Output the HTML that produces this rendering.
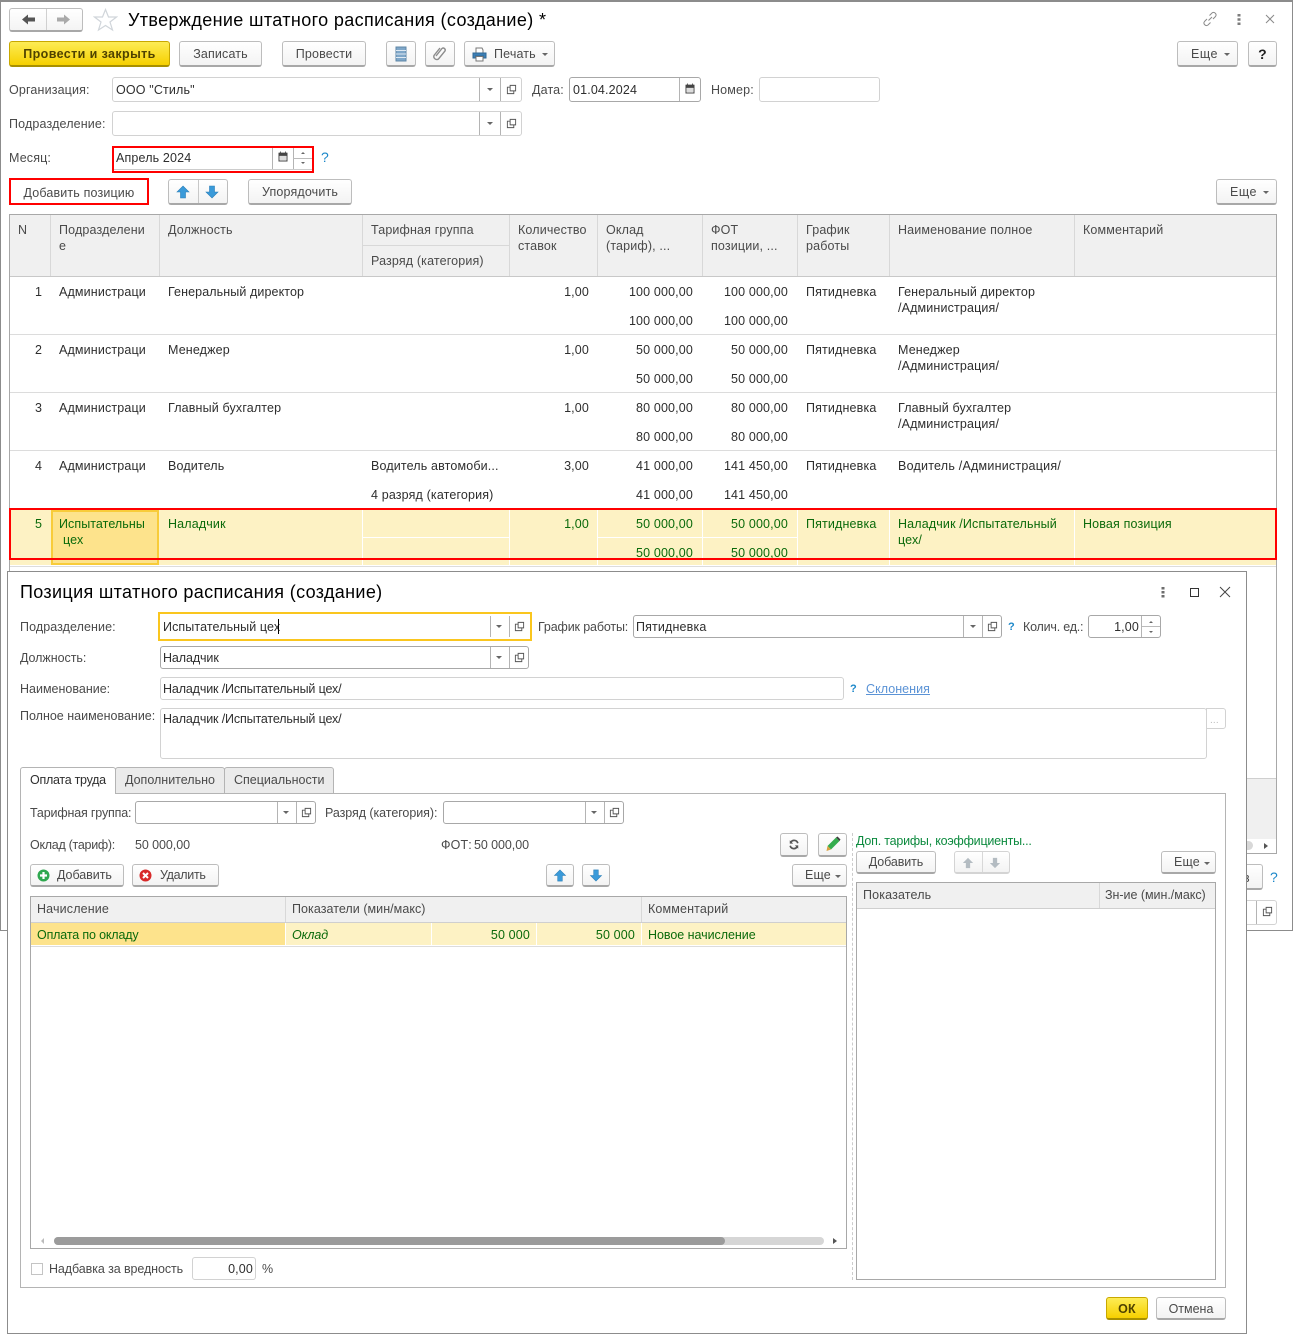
<!DOCTYPE html>
<html lang="ru"><head><meta charset="utf-8"><title>Утверждение штатного расписания</title>
<style>
html,body{margin:0;padding:0;background:#fff}
#r{position:relative;width:1293px;height:1339px;overflow:hidden;background:#fff;font:13px/16px "Liberation Sans",Arial,sans-serif;color:#4a4a4a}
#r div,#r span.t,#r svg{position:absolute}
.t{position:absolute;white-space:nowrap;line-height:16px;font-size:12.5px;letter-spacing:.15px}
.d{color:#2e2e2e}
.g{color:#0b6a0b}
.r{text-align:right;width:100px}
.b{box-sizing:border-box;border:1px solid #bdbdbd;border-bottom:2px solid #a8a8a8;border-radius:3px;background:linear-gradient(#fff,#f3f3f3);text-align:center;line-height:25px;font-size:12.5px;letter-spacing:.15px;color:#4a4a4a;white-space:nowrap}
.y{background:linear-gradient(#fdec55,#f6d000);border-color:#c8a800;border-bottom-color:#a89000;color:#4f4200;font-weight:bold}
.f{box-sizing:border-box;border:1px solid #d2d2d2;border-radius:3px;background:#fff}
.f2{border-color:#a8a8a8}
.s{width:1px;background:#b4b4b4}
.l{background:#dcdcdc}
.a{width:0;height:0;border-left:3px solid transparent;border-right:3px solid transparent;border-top:3px solid #666}
.h{background:#f0f0f0}
.w{background:#fff}
</style></head><body>
<svg width="0" height="0" style="position:absolute">
<defs>
<symbol id="cp" viewBox="0 0 12 12"><path d="M4.500 1.500h6v6h-6z M4.500 3.500H1.500v7h7V7.500" fill="none" stroke="#555" stroke-width="1"/></symbol>
<symbol id="up" viewBox="0 0 14 14"><path d="M7 1L13 7H9.500V13H4.500V7H1Z" fill="#3a9ad9" stroke="#2b7fb8" stroke-width=".6"/></symbol>
<symbol id="dn" viewBox="0 0 14 14"><path d="M7 13L13 7H9.500V1H4.500V7H1Z" fill="#3a9ad9" stroke="#2b7fb8" stroke-width=".6"/></symbol>
<symbol id="cal" viewBox="0 0 10 10"><path d="M1 2h8v7.500H1z" fill="#fff" stroke="#444"/><path d="M1 1.500h8V4H1zM2.500 0v2M7.500 0v2M2.500 5.500h1M4.500 5.500h1M6.500 5.500h1M2.500 7.500h1M4.500 7.500h1M6.500 7.500h1" fill="#444" stroke="#444" stroke-width=".8"/></symbol>
</defs>
</svg>
<div id="r">
<!-- back window -->
<div style="left:0;top:0;width:1293px;height:931px;box-sizing:border-box;border:1px solid #8c8c8c;border-width:2px 1px 1px 1px;background:#fff"></div>

<div class="b" style="left:9px;top:8px;width:74px;height:24px;background:linear-gradient(#fff,#f4f4f4)"></div>
<div class="s" style="left:46px;top:9px;height:21px;background:#d0d0d0"></div>
<svg style="left:21px;top:13px" width="15" height="13" viewBox="0 0 15 13"><path d="M1 6.500L7 1.500V4.500H14V8.500H7V11.500Z" fill="#555"/></svg>
<svg style="left:56px;top:13px" width="15" height="13" viewBox="0 0 15 13"><path d="M14 6.500L8 1.500V4.500H1V8.500H8V11.500Z" fill="#aaa"/></svg>
<svg style="left:93px;top:8px" width="25" height="24" viewBox="0 0 25 24"><path d="M12.500 1.500L15.500 9H23.500L17 14L19.500 22L12.500 17.500L5.500 22L8 14L1.500 9H9.500Z" fill="#fff" stroke="#d0d5da" stroke-width="1.200"/></svg>
<span class="t" style="left:128px;top:10px;font-size:18px;line-height:20px;color:#000;letter-spacing:.37px">Утверждение штатного расписания (создание) *</span>
<svg style="left:1201px;top:10px" width="18" height="18" viewBox="0 0 18 18"><path d="M7.500 10.500L11 7M6 9L3.500 11.500a2.500 2.500 0 0 0 3.500 3.500L9.500 12.500M8.500 5.500L11 3a2.500 2.500 0 0 1 3.500 3.500L12 9" fill="none" stroke="#8a8a8a" stroke-width="1"/></svg>
<svg style="left:1236px;top:12px" width="6" height="15" viewBox="0 0 6 15"><path d="M1.500 2h3v2.500h-3zM1.500 6.200h3v2.500h-3zM1.500 10.500h3V13h-3z" fill="#7d7d7d"/></svg>
<svg style="left:1264px;top:13px" width="12" height="12" viewBox="0 0 12 12"><path d="M2 2L10 10M10 2L2 10" stroke="#8a8a8a" stroke-width="1"/></svg>

<div class="b y" style="left:9px;top:41px;width:161px;height:26px;letter-spacing:.4px">Провести и закрыть</div>
<div class="b" style="left:179px;top:41px;width:83px;height:26px">Записать</div>
<div class="b" style="left:282px;top:41px;width:84px;height:26px">Провести</div>
<div class="b" style="left:386px;top:41px;width:30px;height:26px"></div>
<svg style="left:395px;top:46px" width="12" height="16" viewBox="0 0 12 16"><path d="M1 1h10v14H1z" fill="#7fa7c9" stroke="#5f87a8"/><path d="M1 4.500h10M1 8h10M1 11.500h10" stroke="#dfe9f2"/></svg>
<div class="b" style="left:425px;top:41px;width:30px;height:26px"></div>
<svg style="left:432px;top:45px" width="16" height="18" viewBox="0 0 16 18"><path d="M4 11L10 3.500a2 2 0 0 1 3 2.500L6.500 14a3 3 0 0 1-4.500-3.500L8 3" fill="none" stroke="#8c8c8c" stroke-width="1.400"/></svg>
<div class="b" style="left:464px;top:41px;width:91px;height:26px;text-align:left;padding-left:29px">Печать</div>
<svg style="left:472px;top:47px" width="15" height="15" viewBox="0 0 15 15"><path d="M4 1h6l1 2v3H4z" fill="#fff" stroke="#777"/><path d="M1 6h13v5h-2.500v-2h-8v2H1z" fill="#3c7fb5" stroke="#2f6896"/><path d="M4 9.500h7V14H4z" fill="#fff" stroke="#777"/></svg>
<div class="a" style="left:542px;top:53px"></div>
<div class="b" style="left:1177px;top:41px;width:61px;height:26px;text-align:left;padding-left:13px;letter-spacing:.5px">Еще</div>
<div class="a" style="left:1224px;top:53px"></div>
<div class="b d" style="left:1248px;top:41px;width:29px;height:26px;font-weight:bold;font-size:14px;color:#222">?</div>

<!-- header fields -->
<span class="t" style="left:9px;top:82px">Организация:</span>
<div class="f" style="left:112px;top:77px;width:410px;height:25px"></div>
<span class="t d" style="left:116px;top:82px">ООО "Стиль"</span>
<div class="s" style="left:479px;top:78px;height:23px"></div><div class="a" style="left:487px;top:88px"></div>
<div class="s" style="left:500px;top:78px;height:23px"></div><svg style="left:506px;top:84px" width="11" height="11"><use href="#cp"/></svg>
<span class="t" style="left:532px;top:82px">Дата:</span>
<div class="f f2" style="left:569px;top:77px;width:132px;height:25px"></div>
<span class="t d" style="left:573px;top:82px">01.04.2024</span>
<div class="s" style="left:679px;top:78px;height:23px"></div><svg style="left:685px;top:83px" width="10" height="11"><use href="#cal"/></svg>
<span class="t" style="left:711px;top:82px">Номер:</span>
<div class="f" style="left:759px;top:77px;width:121px;height:25px"></div>

<span class="t" style="left:9px;top:116px">Подразделение:</span>
<div class="f" style="left:112px;top:111px;width:410px;height:25px"></div>
<div class="s" style="left:479px;top:112px;height:23px"></div><div class="a" style="left:487px;top:122px"></div>
<div class="s" style="left:500px;top:112px;height:23px"></div><svg style="left:506px;top:118px" width="11" height="11"><use href="#cp"/></svg>

<span class="t" style="left:9px;top:150px">Месяц:</span>
<div style="left:112px;top:146px;width:202px;height:27px;box-sizing:border-box;border:2px solid #f00;background:#fff"></div>
<div style="left:114px;top:169px;width:198px;height:1px;background:#ccc"></div>
<span class="t d" style="left:116px;top:150px">Апрель 2024</span>
<div class="s" style="left:272px;top:148px;height:21px"></div><svg style="left:278px;top:151px" width="10" height="11"><use href="#cal"/></svg>
<div class="s" style="left:293px;top:148px;height:21px"></div><div style="left:293px;top:158px;width:19px;height:1px;background:#bbb"></div>
<div class="a" style="left:301px;top:152px;transform:rotate(180deg);border-left-width:2px;border-right-width:2px;border-top-width:2px"></div>
<div class="a" style="left:301px;top:162px;border-left-width:2px;border-right-width:2px;border-top-width:2px"></div>
<span class="t" style="left:321px;top:149px;color:#1b87c9;font-size:14px">?</span>

<div class="b" style="left:9px;top:178px;width:140px;height:27px;border:2px solid #f00;border-radius:0;background:#fff;line-height:26px">Добавить позицию</div>
<div class="b" style="left:168px;top:179px;width:60px;height:26px"></div>
<div class="s" style="left:198px;top:180px;height:23px;background:#c8c8c8"></div>
<svg style="left:176px;top:185px" width="14" height="14"><use href="#up"/></svg>
<svg style="left:205px;top:185px" width="14" height="14"><use href="#dn"/></svg>
<div class="b" style="left:248px;top:179px;width:104px;height:26px">Упорядочить</div>
<div class="b" style="left:1216px;top:179px;width:61px;height:26px;text-align:left;padding-left:13px;letter-spacing:.5px">Еще</div>
<div class="a" style="left:1263px;top:191px"></div>

<!-- main table -->
<div style="left:9px;top:214px;width:1268px;height:640px;box-sizing:border-box;border:1px solid #a8a8a8;background:#fff"></div>
<div class="h" style="left:10px;top:215px;width:1266px;height:61px"></div>
<div class="l" style="left:10px;top:276px;width:1266px;height:1px;background:#c8c8c8"></div>
<div class="s w" style="left:50px;top:215px;height:61px;background:#d8d8d8"></div>
<div class="s" style="left:159px;top:215px;height:61px;background:#d8d8d8"></div>
<div class="s" style="left:362px;top:215px;height:61px;background:#d8d8d8"></div>
<div class="s" style="left:509px;top:215px;height:61px;background:#d8d8d8"></div>
<div class="s" style="left:597px;top:215px;height:61px;background:#d8d8d8"></div>
<div class="s" style="left:702px;top:215px;height:61px;background:#d8d8d8"></div>
<div class="s" style="left:797px;top:215px;height:61px;background:#d8d8d8"></div>
<div class="s" style="left:889px;top:215px;height:61px;background:#d8d8d8"></div>
<div class="s" style="left:1074px;top:215px;height:61px;background:#d8d8d8"></div>
<div class="l" style="left:363px;top:245px;width:146px;height:1px;background:#d8d8d8"></div>
<span class="t" style="left:18px;top:222px">N</span>
<span class="t" style="left:59px;top:222px">Подразделени</span><span class="t" style="left:59px;top:238px">е</span>
<span class="t" style="left:168px;top:222px">Должность</span>
<span class="t" style="left:371px;top:222px">Тарифная группа</span><span class="t" style="left:371px;top:253px">Разряд (категория)</span>
<span class="t" style="left:518px;top:222px">Количество</span><span class="t" style="left:518px;top:238px">ставок</span>
<span class="t" style="left:606px;top:222px">Оклад</span><span class="t" style="left:606px;top:238px">(тариф), ...</span>
<span class="t" style="left:711px;top:222px">ФОТ</span><span class="t" style="left:711px;top:238px">позиции, ...</span>
<span class="t" style="left:806px;top:222px">График</span><span class="t" style="left:806px;top:238px">работы</span>
<span class="t" style="left:898px;top:222px">Наименование полное</span>
<span class="t" style="left:1083px;top:222px">Комментарий</span>

<div class="l" style="left:10px;top:334px;width:1266px;height:1px"></div>
<div class="l" style="left:10px;top:392px;width:1266px;height:1px"></div>
<div class="l" style="left:10px;top:450px;width:1266px;height:1px"></div>
<div class="l" style="left:10px;top:566px;width:1266px;height:1px"></div>

<span class="t d" style="left:35px;top:284px">1</span><span class="t d" style="left:59px;top:284px">Администраци</span><span class="t d" style="left:168px;top:284px;letter-spacing:.1px">Генеральный директор</span>
<span class="t d r" style="left:489px;top:284px">1,00</span><span class="t d r" style="left:593px;top:284px">100 000,00</span><span class="t d r" style="left:688px;top:284px">100 000,00</span><span class="t d" style="left:806px;top:284px">Пятидневка</span><span class="t d" style="left:898px;top:284px">Генеральный директор</span><span class="t d" style="left:898px;top:300px">/Администрация/</span>
<span class="t d r" style="left:593px;top:313px">100 000,00</span><span class="t d r" style="left:688px;top:313px">100 000,00</span>

<span class="t d" style="left:35px;top:342px">2</span><span class="t d" style="left:59px;top:342px">Администраци</span><span class="t d" style="left:168px;top:342px">Менеджер</span>
<span class="t d r" style="left:489px;top:342px">1,00</span><span class="t d r" style="left:593px;top:342px">50 000,00</span><span class="t d r" style="left:688px;top:342px">50 000,00</span><span class="t d" style="left:806px;top:342px">Пятидневка</span><span class="t d" style="left:898px;top:342px">Менеджер</span><span class="t d" style="left:898px;top:358px">/Администрация/</span>
<span class="t d r" style="left:593px;top:371px">50 000,00</span><span class="t d r" style="left:688px;top:371px">50 000,00</span>

<span class="t d" style="left:35px;top:400px">3</span><span class="t d" style="left:59px;top:400px">Администраци</span><span class="t d" style="left:168px;top:400px">Главный бухгалтер</span>
<span class="t d r" style="left:489px;top:400px">1,00</span><span class="t d r" style="left:593px;top:400px">80 000,00</span><span class="t d r" style="left:688px;top:400px">80 000,00</span><span class="t d" style="left:806px;top:400px">Пятидневка</span><span class="t d" style="left:898px;top:400px">Главный бухгалтер</span><span class="t d" style="left:898px;top:416px">/Администрация/</span>
<span class="t d r" style="left:593px;top:429px">80 000,00</span><span class="t d r" style="left:688px;top:429px">80 000,00</span>

<span class="t d" style="left:35px;top:458px">4</span><span class="t d" style="left:59px;top:458px">Администраци</span><span class="t d" style="left:168px;top:458px">Водитель</span><span class="t d" style="left:371px;top:458px">Водитель автомоби...</span>
<span class="t d r" style="left:489px;top:458px">3,00</span><span class="t d r" style="left:593px;top:458px">41 000,00</span><span class="t d r" style="left:688px;top:458px">141 450,00</span><span class="t d" style="left:806px;top:458px">Пятидневка</span><span class="t d" style="left:898px;top:458px;letter-spacing:.23px">Водитель /Администрация/</span>
<span class="t d" style="left:371px;top:487px">4 разряд (категория)</span><span class="t d r" style="left:593px;top:487px">41 000,00</span><span class="t d r" style="left:688px;top:487px">141 450,00</span>

<!-- selected row -->
<div style="left:10px;top:509px;width:1266px;height:56px;background:#fdf2c4"></div>
<div style="left:51px;top:510px;width:108px;height:55px;box-sizing:border-box;border:2px solid #f8cc3a;background:#fde38c"></div>
<div class="s" style="left:362px;top:509px;height:56px;background:#fff"></div>
<div class="s" style="left:509px;top:509px;height:56px;background:#fff"></div>
<div class="s" style="left:597px;top:509px;height:56px;background:#fff"></div>
<div class="s" style="left:702px;top:509px;height:56px;background:#fff"></div>
<div class="s" style="left:797px;top:509px;height:56px;background:#fff"></div>
<div class="s" style="left:889px;top:509px;height:56px;background:#fff"></div>
<div class="s" style="left:1074px;top:509px;height:56px;background:#fff"></div>
<div style="left:363px;top:537px;width:146px;height:1px;background:#fff"></div>
<div style="left:598px;top:537px;width:199px;height:1px;background:#fff"></div>
<span class="t g" style="left:35px;top:516px">5</span><span class="t g" style="left:59px;top:516px;letter-spacing:.07px">Испытательны</span><span class="t g" style="left:63px;top:532px">цех</span><span class="t g" style="left:168px;top:516px">Наладчик</span>
<span class="t g r" style="left:489px;top:516px">1,00</span><span class="t g r" style="left:593px;top:516px">50 000,00</span><span class="t g r" style="left:688px;top:516px">50 000,00</span><span class="t g" style="left:806px;top:516px">Пятидневка</span><span class="t g" style="left:898px;top:516px">Наладчик /Испытательный</span><span class="t g" style="left:898px;top:532px">цех/</span><span class="t g" style="left:1083px;top:516px">Новая позиция</span>
<span class="t g r" style="left:593px;top:545px">50 000,00</span><span class="t g r" style="left:688px;top:545px">50 000,00</span>
<div style="left:9px;top:508px;width:1268px;height:52px;box-sizing:border-box;border:2px solid #f00"></div>

<!-- right strip of table and footer -->
<div class="h" style="left:1246px;top:779px;width:30px;height:60px"></div>
<div class="l" style="left:1246px;top:778px;width:30px;height:1px;background:#cfcfcf"></div>
<div style="left:1246px;top:841px;width:7px;height:9px;border-radius:0 5px 5px 0;background:#d8d8d8"></div>
<div style="left:1264px;top:843px;width:0;height:0;border-top:3px solid transparent;border-bottom:3px solid transparent;border-left:4px solid #555"></div>
<div class="b" style="left:1200px;top:864px;width:63px;height:26px"></div>
<span class="t" style="left:1243px;top:870px">в</span>
<span class="t" style="left:1270px;top:869px;color:#1b87c9;font-size:14px">?</span>
<div class="f" style="left:1180px;top:900px;width:97px;height:25px"></div>
<div class="s" style="left:1256px;top:901px;height:23px"></div><svg style="left:1262px;top:906px" width="11" height="11"><use href="#cp"/></svg>

<!-- dialog -->
<div style="left:7px;top:571px;width:1240px;height:763px;box-sizing:border-box;border:1px solid #8c8c8c;background:#fff"></div>
<span class="t" style="left:20px;top:582px;font-size:18px;line-height:20px;color:#000;letter-spacing:.34px">Позиция штатного расписания (создание)</span>
<svg style="left:1160px;top:586px" width="6" height="13" viewBox="0 0 6 13"><path d="M1.500 1h3v2.500h-3zM1.500 5h3v2.500h-3zM1.500 9h3v2.500h-3z" fill="#6d6d6d"/></svg>
<div style="left:1190px;top:588px;width:9px;height:9px;box-sizing:border-box;border:1.500px solid #333"></div>
<svg style="left:1219px;top:586px" width="12" height="12" viewBox="0 0 12 12"><path d="M1 1L11 11M11 1L1 11" stroke="#444" stroke-width="1"/></svg>

<span class="t" style="left:20px;top:619px;letter-spacing:.08px">Подразделение:</span>
<div style="left:158px;top:612px;width:374px;height:29px;box-sizing:border-box;border:2px solid #fac61e;background:#fff"></div>
<span class="t d" style="left:163px;top:619px;letter-spacing:.1px">Испытательный цех</span>
<div style="left:278px;top:619px;width:1px;height:15px;background:#000"></div>
<div class="s" style="left:490px;top:616px;height:21px"></div><div class="a" style="left:496px;top:625px"></div>
<div class="s" style="left:509px;top:616px;height:21px"></div><svg style="left:514px;top:621px" width="11" height="11"><use href="#cp"/></svg>
<span class="t" style="left:538px;top:619px;letter-spacing:-.14px">График работы:</span>
<div class="f f2" style="left:633px;top:615px;width:369px;height:23px"></div>
<span class="t d" style="left:636px;top:619px">Пятидневка</span>
<div class="s" style="left:963px;top:616px;height:21px"></div><div class="a" style="left:970px;top:625px"></div>
<div class="s" style="left:982px;top:616px;height:21px"></div><svg style="left:987px;top:621px" width="11" height="11"><use href="#cp"/></svg>
<span class="t" style="left:1008px;top:619px;font-size:11px;color:#1b87c9;font-weight:bold">?</span>
<span class="t" style="left:1023px;top:619px;letter-spacing:-.21px">Колич. ед.:</span>
<div class="f f2" style="left:1088px;top:615px;width:73px;height:23px"></div>
<span class="t d" style="left:1039px;top:619px;width:100px;text-align:right">1,00</span>
<div class="s" style="left:1141px;top:616px;height:21px"></div><div style="left:1142px;top:626px;width:18px;height:1px;background:#bbb"></div>
<div class="a" style="left:1149px;top:621px;transform:rotate(180deg);border-left-width:2px;border-right-width:2px;border-top-width:2px"></div>
<div class="a" style="left:1149px;top:631px;border-left-width:2px;border-right-width:2px;border-top-width:2px"></div>

<span class="t" style="left:20px;top:650px;letter-spacing:-.05px">Должность:</span>
<div class="f f2" style="left:160px;top:646px;width:369px;height:23px"></div>
<span class="t d" style="left:163px;top:650px;letter-spacing:-.1px">Наладчик</span>
<div class="s" style="left:490px;top:647px;height:21px"></div><div class="a" style="left:496px;top:656px"></div>
<div class="s" style="left:509px;top:647px;height:21px"></div><svg style="left:514px;top:652px" width="11" height="11"><use href="#cp"/></svg>

<span class="t" style="left:20px;top:681px;letter-spacing:0">Наименование:</span>
<div class="f" style="left:160px;top:677px;width:684px;height:23px"></div>
<span class="t d" style="left:163px;top:681px;letter-spacing:-.14px">Наладчик /Испытательный цех/</span>
<span class="t" style="left:850px;top:681px;font-size:11px;color:#1b87c9;font-weight:bold">?</span>
<span class="t" style="left:866px;top:681px;color:#5b93d6;text-decoration:underline;letter-spacing:.05px">Склонения</span>
<span class="t" style="left:20px;top:708px;letter-spacing:0">Полное наименование:</span>
<div class="f" style="left:160px;top:708px;width:1047px;height:51px"></div>
<span class="t d" style="left:163px;top:711px;letter-spacing:-.14px">Наладчик /Испытательный цех/</span>
<div class="f" style="left:1206px;top:708px;width:20px;height:21px;border-radius:0 3px 3px 0"></div>
<span class="t" style="left:1210px;top:713px;font-size:10px;color:#bbb">...</span>

<!-- tabs -->
<div style="left:20px;top:793px;width:1206px;height:495px;box-sizing:border-box;border:1px solid #b4b4b4;background:#fff"></div>
<div style="left:115px;top:767px;width:110px;height:27px;box-sizing:border-box;border:1px solid #b4b4b4;border-radius:3px 3px 0 0;background:#ebebeb"></div>
<div style="left:224px;top:767px;width:110px;height:27px;box-sizing:border-box;border:1px solid #b4b4b4;border-radius:3px 3px 0 0;background:#ebebeb"></div>
<div style="left:20px;top:767px;width:96px;height:27px;box-sizing:border-box;border:1px solid #b4b4b4;border-bottom:0;border-radius:3px 3px 0 0;background:#fff"></div>
<span class="t d" style="left:30px;top:772px;letter-spacing:-.27px">Оплата труда</span>
<span class="t" style="left:125px;top:772px;letter-spacing:0">Дополнительно</span>
<span class="t" style="left:234px;top:772px;letter-spacing:0">Специальности</span>

<span class="t" style="left:30px;top:805px;letter-spacing:-.16px">Тарифная группа:</span>
<div class="f f2" style="left:135px;top:801px;width:181px;height:23px"></div>
<div class="s" style="left:277px;top:802px;height:21px"></div><div class="a" style="left:283px;top:811px"></div>
<div class="s" style="left:296px;top:802px;height:21px"></div><svg style="left:301px;top:807px" width="11" height="11"><use href="#cp"/></svg>
<span class="t" style="left:325px;top:805px;letter-spacing:-.06px">Разряд (категория):</span>
<div class="f f2" style="left:443px;top:801px;width:181px;height:23px"></div>
<div class="s" style="left:585px;top:802px;height:21px"></div><div class="a" style="left:591px;top:811px"></div>
<div class="s" style="left:604px;top:802px;height:21px"></div><svg style="left:609px;top:807px" width="11" height="11"><use href="#cp"/></svg>

<span class="t" style="left:30px;top:837px;letter-spacing:-.28px">Оклад (тариф):</span>
<span class="t" style="left:135px;top:837px;letter-spacing:-.07px">50 000,00</span>
<span class="t" style="left:441px;top:837px">ФОТ:</span>
<span class="t" style="left:474px;top:837px;letter-spacing:-.07px">50 000,00</span>

<div class="b" style="left:780px;top:833px;width:28px;height:24px"></div>
<svg style="left:788px;top:839px" width="12" height="11" viewBox="0 0 14 13"><path d="M11.500 5a4.500 4.500 0 0 0-8-1.500M2.500 8a4.500 4.500 0 0 0 8 1.500" fill="none" stroke="#555" stroke-width="2"/><path d="M2 1.500V5.500H6ZM12 11.500V7.500H8Z" fill="#555"/></svg>
<div class="b" style="left:818px;top:833px;width:29px;height:24px"></div>
<svg style="left:825px;top:836px" width="16" height="16" viewBox="0 0 16 16"><path d="M11 1.500L14.500 5L6 13.500L2.500 10Z" fill="#35ad4e"/><path d="M11 1.500L12.500 0.500L15.500 3.500L14.500 5Z" fill="#3c3c3c"/><path d="M2.500 10L6 13.500L1.500 15Z" fill="#d9a03f"/></svg>
<span class="t" style="left:856px;top:833px;color:#0c8a3e;letter-spacing:-.21px">Доп. тарифы, коэффициенты...</span>

<div class="b" style="left:30px;top:864px;width:94px;height:23px;line-height:21px;text-align:left;padding-left:26px;letter-spacing:-.05px">Добавить</div>
<svg style="left:37px;top:869px" width="13" height="13" viewBox="0 0 13 13"><circle cx="6.500" cy="6.500" r="6" fill="#2fa84f"/><path d="M6.500 3v7M3 6.500h7" stroke="#fff" stroke-width="2.200"/></svg>
<div class="b" style="left:132px;top:864px;width:87px;height:23px;line-height:21px;text-align:left;padding-left:27px;letter-spacing:-.3px">Удалить</div>
<svg style="left:139px;top:869px" width="13" height="13" viewBox="0 0 13 13"><circle cx="6.500" cy="6.500" r="6" fill="#d82a2a"/><path d="M4 4l5 5M9 4l-5 5" stroke="#fff" stroke-width="2"/></svg>
<div class="b" style="left:546px;top:864px;width:28px;height:23px"></div>
<svg style="left:553px;top:869px" width="14" height="13"><use href="#up"/></svg>
<div class="b" style="left:582px;top:864px;width:28px;height:23px"></div>
<svg style="left:589px;top:869px" width="14" height="13"><use href="#dn"/></svg>
<div class="b" style="left:792px;top:864px;width:55px;height:23px;line-height:21px;text-align:left;padding-left:12px">Еще</div>
<div class="a" style="left:835px;top:875px"></div>

<!-- left table -->
<div style="left:30px;top:896px;width:817px;height:353px;box-sizing:border-box;border:1px solid #a8a8a8;background:#fff"></div>
<div class="h" style="left:31px;top:897px;width:815px;height:25px"></div>
<div class="s" style="left:285px;top:897px;height:25px;background:#d8d8d8"></div>
<div class="s" style="left:641px;top:897px;height:25px;background:#d8d8d8"></div>
<div style="left:31px;top:922px;width:815px;height:1px;background:#cfcfcf"></div>
<div style="left:31px;top:923px;width:254px;height:22px;background:#fde38c"></div>
<div style="left:286px;top:923px;width:560px;height:22px;background:#fdf2c4"></div>
<div class="s" style="left:285px;top:923px;height:22px;background:#fff"></div>
<div class="s" style="left:431px;top:923px;height:22px;background:#fff"></div>
<div class="s" style="left:536px;top:923px;height:22px;background:#fff"></div>
<div class="s" style="left:641px;top:923px;height:22px;background:#fff"></div>
<div class="l" style="left:31px;top:946px;width:815px;height:1px"></div>
<span class="t" style="left:37px;top:901px">Начисление</span>
<span class="t" style="left:292px;top:901px;letter-spacing:.05px">Показатели (мин/макс)</span>
<span class="t" style="left:648px;top:901px">Комментарий</span>
<span class="t g" style="left:37px;top:927px;letter-spacing:-.16px">Оплата по окладу</span>
<span class="t g" style="left:292px;top:927px;font-style:italic;letter-spacing:-.1px">Оклад</span>
<span class="t g r" style="left:430px;top:927px">50 000</span>
<span class="t g r" style="left:535px;top:927px">50 000</span>
<span class="t g" style="left:648px;top:927px;letter-spacing:-.04px">Новое начисление</span>
<div style="left:54px;top:1237px;width:770px;height:8px;border-radius:4px;background:#d6d6d6"></div>
<div style="left:54px;top:1237px;width:671px;height:8px;border-radius:4px;background:#9b9b9b"></div>
<div style="left:41px;top:1238px;width:0;height:0;border-top:3px solid transparent;border-bottom:3px solid transparent;border-right:3px solid #bbb"></div>
<div style="left:833px;top:1238px;width:0;height:0;border-top:3px solid transparent;border-bottom:3px solid transparent;border-left:4px solid #555"></div>

<div style="left:31px;top:1263px;width:12px;height:12px;box-sizing:border-box;border:1px solid #c4c4c4;background:#fff"></div>
<span class="t" style="left:49px;top:1261px;letter-spacing:-.09px">Надбавка за вредность</span>
<div class="f" style="left:192px;top:1257px;width:64px;height:23px"></div>
<span class="t d" style="left:153px;top:1261px;width:100px;text-align:right">0,00</span>
<span class="t" style="left:262px;top:1261px">%</span>

<!-- splitter -->
<div style="left:852px;top:833px;width:0;height:447px;border-left:1px dashed #ccc"></div>

<!-- right panel -->
<div class="b" style="left:856px;top:851px;width:80px;height:23px;line-height:21px;letter-spacing:-.1px">Добавить</div>
<div class="b" style="left:954px;top:851px;width:56px;height:23px;border-color:#d4d4d4"></div>
<div class="s" style="left:982px;top:852px;height:20px;background:#d8d8d8"></div>
<svg style="left:961px;top:857px" width="14" height="12" viewBox="0 0 14 14"><path d="M7 1L13 7H9.500V13H4.500V7H1Z" fill="#b4bcc2"/></svg>
<svg style="left:988px;top:857px" width="14" height="12" viewBox="0 0 14 14"><path d="M7 13L13 7H9.500V1H4.500V7H1Z" fill="#b4bcc2"/></svg>
<div class="b" style="left:1161px;top:851px;width:55px;height:23px;line-height:21px;text-align:left;padding-left:12px">Еще</div>
<div class="a" style="left:1204px;top:862px"></div>
<div style="left:856px;top:882px;width:360px;height:398px;box-sizing:border-box;border:1px solid #a8a8a8;background:#fff"></div>
<div class="h" style="left:857px;top:883px;width:358px;height:25px"></div>
<div style="left:857px;top:908px;width:358px;height:1px;background:#cfcfcf"></div>
<div class="s" style="left:1099px;top:883px;height:25px;background:#d8d8d8"></div>
<span class="t" style="left:863px;top:887px">Показатель</span>
<span class="t" style="left:1105px;top:887px;letter-spacing:-.03px">Зн-ие (мин./макс)</span>

<div class="b y" style="left:1106px;top:1297px;width:42px;height:23px;line-height:22px">ОК</div>
<div class="b" style="left:1156px;top:1297px;width:70px;height:23px;line-height:22px;letter-spacing:0">Отмена</div>
</div>
</body></html>
